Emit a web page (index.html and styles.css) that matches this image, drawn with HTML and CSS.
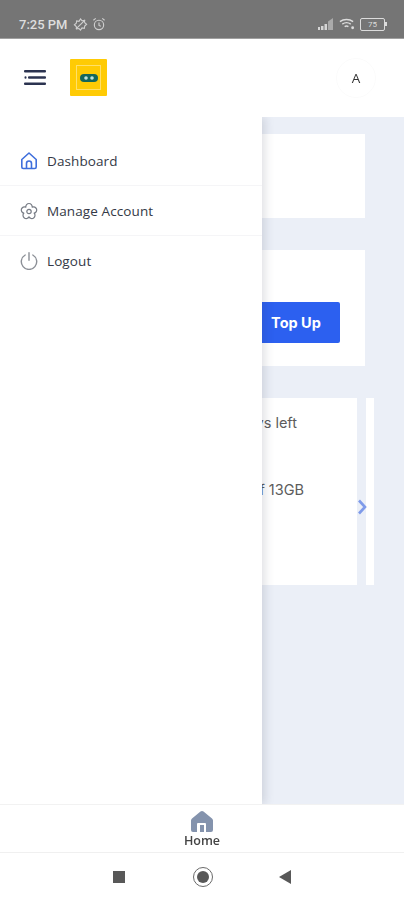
FILE: index.html
```html
<!DOCTYPE html>
<html lang="en">
<head>
    <meta charset="UTF-8">
    <meta name="viewport" content="width=device-width, initial-scale=1.0">
    <title>Dashboard</title>
    <link rel="stylesheet" href="styles.css">
</head>
<body>
    <div class="app">
        <div class="status-bar">
            <span class="status-time">7:25 PM</span>
            <svg class="status-icon" width="15" height="15" viewBox="0 0 16 16" fill="none" stroke="#cfcfcf" stroke-width="1.2">
                <path d="M8 2l1.600 2 2.500-.4.400 2.500 2 1.600-2 1.900-.4 2.500-2.500-.4L8 14l-1.600-1.700-2.500.4-.4-2.500-2-1.900 2-1.600.4-2.500 2.500.4z"/>
                <path d="M3 13L13 3"/>
            </svg>
            <svg class="status-icon" width="14" height="14" viewBox="0 0 15 15" fill="none" stroke="#cfcfcf" stroke-width="1.2">
                <circle cx="7.500" cy="8.500" r="5"/>
                <path d="M7.500 6v3l2 1M1.500 3.500L4 1.500M13.500 3.500L11 1.500"/>
            </svg>
            <span class="status-spacer"></span>
            <svg width="15" height="12" viewBox="0 0 15 12" fill="#d6d6d6">
                <path d="M0 9h2v3H0zM3 8h2.500v4H3zM6.500 6H9v6H6.500z"/>
                <path d="M10 3.500L15 0v12h-5z" opacity=".55"/>
            </svg>
            <svg class="status-wifi" width="16" height="12" viewBox="0 0 17 12" fill="none" stroke="#dcdcdc" stroke-width="1.500">
                <path d="M1 3.500C5 .5 11 .5 15 3.500M3.500 6.200c2.600-1.900 6.400-1.900 9 0M6 8.800c1.300-.9 2.700-.9 4 0"/>
                <circle cx="14.500" cy="10" r="1.500" fill="#dcdcdc" stroke="none"/>
            </svg>
            <div class="battery"><span class="battery-level">75</span></div>
            <span class="battery-nib"></span>
        </div>

        <header class="top-bar">
            <svg class="menu-icon" width="22" height="15" viewBox="0 0 22 15" fill="#2b3350">
                <rect x="0" y="0" width="22" height="2.400" rx="1"/>
                <rect x="0.500" y="6.300" width="2" height="2.400" rx="1"/>
                <rect x="4" y="6.300" width="18" height="2.400" rx="1"/>
                <rect x="0" y="12.600" width="22" height="2.400" rx="1"/>
            </svg>
            <div class="logo">
                <div class="logo-inner">
                    <svg width="18" height="8" viewBox="0 0 18 8">
                        <rect x="0" y="0" width="18" height="8" rx="4" fill="#14665c"/>
                        <circle cx="6" cy="4" r="1.800" fill="#bfe3dc"/>
                        <circle cx="12" cy="4" r="1.800" fill="#bfe3dc"/>
                    </svg>
                </div>
            </div>
            <div class="avatar">A</div>
        </header>

        <main class="main">
            <div class="content">
                <div class="card card-empty"></div>
                <div class="card card-topup">
                    <button class="topup-btn">Top Up</button>
                </div>
                <div class="plans">
                    <div class="card plan-card">
                        <p class="plan-days">days left</p>
                        <p class="plan-data">of 13GB</p>
                    </div>
                    <div class="card plan-next"></div>
                    <svg class="plans-arrow" width="10" height="16" viewBox="0 0 10 16" fill="none" stroke="#7f9bea" stroke-width="2.600">
                        <path d="M2 1.500L8 8l-6 6.500"/>
                    </svg>
                </div>
            </div>

            <nav class="drawer">
                <a class="drawer-item">
                    <svg width="18" height="18" viewBox="0 0 18 18" fill="none" stroke="#3f6fdc" stroke-width="1.600" stroke-linejoin="round">
                        <path d="M1.800 7.500L9 1l7.200 6.500V15a1.500 1.500 0 0 1-1.500 1.500H3.300A1.500 1.500 0 0 1 1.800 15z"/>
                        <path d="M6.500 16.500v-5a2.500 2.500 0 0 1 5 0v5"/>
                    </svg>
                    <span>Dashboard</span>
                </a>
                <a class="drawer-item">
                    <svg width="18" height="18" viewBox="0 0 18 18" fill="none" stroke="#777c85" stroke-width="1.200" stroke-linejoin="round">
                        <path d="M5.830 5.130A3.200 3.200 0 1 1 12.170 5.130A3.200 3.200 0 1 1 14.140 11.170A3.200 3.200 0 1 1 9 14.900A3.200 3.200 0 1 1 3.860 11.170A3.200 3.200 0 1 1 5.830 5.130z"/>
                        <circle cx="9" cy="9.500" r="2.200"/>
                    </svg>
                    <span>Manage Account</span>
                </a>
                <a class="drawer-item">
                    <svg width="18" height="18" viewBox="0 0 18 18" fill="none" stroke="#8b8f96" stroke-width="1.400" stroke-linecap="round">
                        <path d="M5.200 3A7.700 7.700 0 1 0 12.800 3"/>
                        <path d="M9 .8v7.400"/>
                    </svg>
                    <span>Logout</span>
                </a>
            </nav>
        </main>

        <div class="tab-bar">
            <svg width="22" height="21" viewBox="0 0 22 21" fill="#8493ad">
                <path fill-rule="evenodd" d="M11 0c.6 0 1.100.2 1.500.6l8.500 7c.6.5 1 1.200 1 2V19a2 2 0 0 1-2 2h-5v-8a1 1 0 0 0-1-1H7a1 1 0 0 0-1 1v8H2a2 2 0 0 1-2-2V9.600c0-.8.400-1.500 1-2l8.500-7C9.900.2 10.400 0 11 0z"/>
                <path d="M9 14h4v7H9z"/>
            </svg>
            <span class="tab-label">Home</span>
        </div>

        <div class="nav-bar">
            <span class="nav-square"></span>
            <span class="nav-circle"><span class="nav-dot"></span></span>
            <span class="nav-back"></span>
        </div>
    </div>
</body>
</html>
```

FILE: styles.css
```css
html, body {
    margin: 0;
    padding: 0;
}
body {
    font-family: "Open Sans", sans-serif;
    background-color: #fff;
}
.app {
    width: 404px;
    height: 900px;
    display: flex;
    flex-direction: column;
    overflow: hidden;
    filter: blur(0.5px);
}

/* status bar */
.status-bar {
    height: 39px;
    box-sizing: border-box;
    flex-shrink: 0;
    display: flex;
    align-items: center;
    padding: 10px 17px 0 19px;
    background-color: #757575;
    border-bottom: 1px solid #a0a0a0;
}
.status-time {
    font-family: Roboto, sans-serif;
    font-size: 13px;
    font-weight: 500;
    color: #dedede;
    margin-right: 5px;
}
.status-icon {
    margin-right: 4px;
}
.status-spacer {
    flex: 1;
}
.status-wifi {
    margin-left: 6px;
}
.battery {
    width: 23px;
    height: 11px;
    margin-left: 5px;
    border: 1px solid #dcdcdc;
    border-radius: 2px;
    display: flex;
    align-items: center;
    justify-content: center;
}
.battery-level {
    font-family: Roboto, sans-serif;
    font-size: 8px;
    color: #dcdcdc;
}
.battery-nib {
    width: 2px;
    height: 4px;
    background-color: #dcdcdc;
}

/* header */
.top-bar {
    height: 78px;
    flex-shrink: 0;
    display: flex;
    align-items: center;
    padding: 0 28px 1px 24px;
    box-sizing: border-box;
    background-color: #fff;
}
.menu-icon {
    margin-right: 24px;
}
.logo {
    width: 37px;
    height: 37px;
    background-color: #ffcb05;
    border-radius: 1px;
    display: flex;
    align-items: center;
    justify-content: center;
}
.logo-inner {
    width: 23px;
    height: 23px;
    border: 1px solid #ffe06a;
    display: flex;
    align-items: center;
    justify-content: center;
}
.avatar {
    width: 40px;
    height: 40px;
    margin-left: auto;
    border: 1px solid #fbfbfb;
    border-radius: 50%;
    box-sizing: border-box;
    display: flex;
    align-items: center;
    justify-content: center;
    font-size: 13.500px;
    color: #333;
}

/* main area */
.main {
    flex: 1;
    position: relative;
    background-color: #ebeff7;
}
.content {
    padding: 17px 39px 0 20px;
    display: flex;
    flex-direction: column;
    gap: 32px;
}
.card {
    background-color: #fff;
}
.card-empty {
    height: 84px;
}
.card-topup {
    height: 116px;
    box-sizing: border-box;
    padding: 0 25px 23px 0;
    display: flex;
    justify-content: flex-end;
    align-items: flex-end;
}
.topup-btn {
    width: 88px;
    height: 41px;
    border: none;
    border-radius: 2px;
    background-color: #2c60f0;
    color: #fff;
    font-family: Inter, sans-serif;
    font-size: 14.500px;
    font-weight: 700;
}
.plans {
    position: relative;
    display: flex;
    gap: 9px;
    height: 187px;
    margin-right: -9px;
}
.plan-card {
    width: 337px;
    flex-shrink: 0;
    box-sizing: border-box;
    padding: 15px 0 0 0;
    color: #5c5c5c;
    font-family: Inter, sans-serif;
    font-size: 14.500px;
    text-align: right;
}
.plan-card p {
    margin: 0;
    line-height: 20px;
}
.plan-days {
    padding-right: 60px;
}
.plan-data {
    padding-right: 53px;
}
.plan-card p.plan-data {
    margin-top: 47px;
}
.plan-next {
    width: 8px;
}
.plans-arrow {
    position: absolute;
    left: 337px;
    top: 101px;
}

/* drawer */
.drawer {
    position: absolute;
    top: 0;
    bottom: 0;
    left: 0;
    width: 262px;
    box-sizing: border-box;
    padding-top: 19px;
    background-color: #fff;
    box-shadow: 3px 0 9px rgba(40, 50, 70, 0.15);
    clip-path: inset(0 -20px 0 0);
}
.drawer-item {
    height: 50px;
    display: flex;
    align-items: center;
    gap: 9px;
    padding-left: 20px;
    box-sizing: border-box;
    border-bottom: 1px solid #f5f5f7;
    font-size: 13.500px;
    letter-spacing: 0.1px;
    font-weight: 500;
    color: #343946;
}
.drawer-item:last-child {
    border-bottom: none;
}

/* bottom */
.tab-bar {
    height: 49px;
    flex-shrink: 0;
    box-sizing: border-box;
    padding-top: 6px;
    display: flex;
    flex-direction: column;
    align-items: center;
    background-color: #fff;
    border-top: 1px solid #f2f2f2;
    border-bottom: 1px solid #f0f0f0;
}
.tab-label {
    font-size: 12.500px;
    font-weight: 600;
    line-height: 14px;
    margin-top: 2px;
    color: #444;
}
.nav-bar {
    height: 47px;
    flex-shrink: 0;
    box-sizing: border-box;
    padding: 0 113px;
    display: flex;
    align-items: center;
    justify-content: space-between;
    background-color: #fff;
}
.nav-square {
    width: 12px;
    height: 12px;
    background-color: #585858;
}
.nav-circle {
    width: 18px;
    height: 18px;
    margin-left: 1px;
    border: 1.500px solid #6a6a6a;
    border-radius: 50%;
    display: flex;
    align-items: center;
    justify-content: center;
}
.nav-dot {
    width: 12px;
    height: 12px;
    border-radius: 50%;
    background-color: #585858;
}
.nav-back {
    width: 0;
    height: 0;
    border-top: 7px solid transparent;
    border-bottom: 7px solid transparent;
    border-right: 12px solid #585858;
}
```
